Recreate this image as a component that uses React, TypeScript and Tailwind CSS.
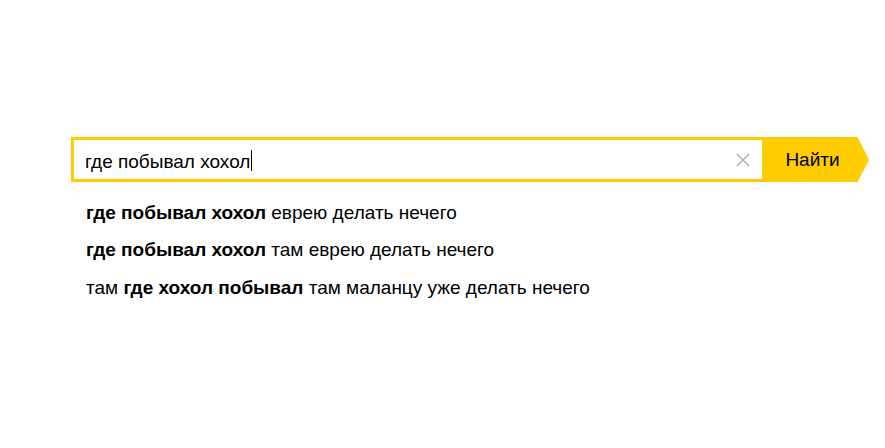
import { FC } from "react";

const suggestions: { pre?: string; bold: string; rest: string }[] = [
	{ bold: "где побывал хохол", rest: " еврею делать нечего" },
	{ bold: "где побывал хохол", rest: " там еврею делать нечего" },
	{ pre: "там ", bold: "где хохол побывал", rest: " там маланцу уже делать нечего" },
];

const ClearIcon: FC = () => (
	<svg width="14" height="14" viewBox="0 0 14 14" className="shrink-0">
		<path d="M1 1L13 13M13 1L1 13" stroke="#a6a6a6" strokeWidth="1.2" fill="none" />
	</svg>
);

const App: FC = () => {
	return (
		<div className="w-[885px] h-[448px] bg-white font-['Liberation_Sans',Arial,sans-serif] text-black">
			<div className="flex flex-col pt-[137px] pl-[71px]">
				<div className="flex h-[45px]">
					<div className="flex items-center w-[691px] h-full border-y-[3px] border-l-[3px] border-[#ffcc00] bg-white pl-[11px] pr-[12px]">
						<span className="text-[19px] leading-none pt-[3px]">где побывал хохол</span>
						<span className="w-px h-[21px] bg-black ml-px mt-[2px]" />
						<div className="flex-1" />
						<ClearIcon />
					</div>
					<div className="flex h-full">
						<div className="w-[95px] h-full bg-[#ffcc00] flex items-center justify-center pl-[6px] pt-[2px] text-[19px]">
							Найти
						</div>
						<svg width="12" height="45" viewBox="0 0 12 45" className="shrink-0">
							<polygon points="0,0 0.5,0 12,23 0.5,45 0,45" fill="#ffcc00" />
						</svg>
					</div>
				</div>
				<div className="flex flex-col mt-[12px] pl-[15px] text-[19px]">
					{suggestions.map((s, i) => (
						<div key={i} className="h-[37.5px] flex items-center whitespace-pre">
							{s.pre && <span>{s.pre}</span>}
							<span className="font-bold">{s.bold}</span>
							<span>{s.rest}</span>
						</div>
					))}
				</div>
			</div>
		</div>
	);
};

export default App;
